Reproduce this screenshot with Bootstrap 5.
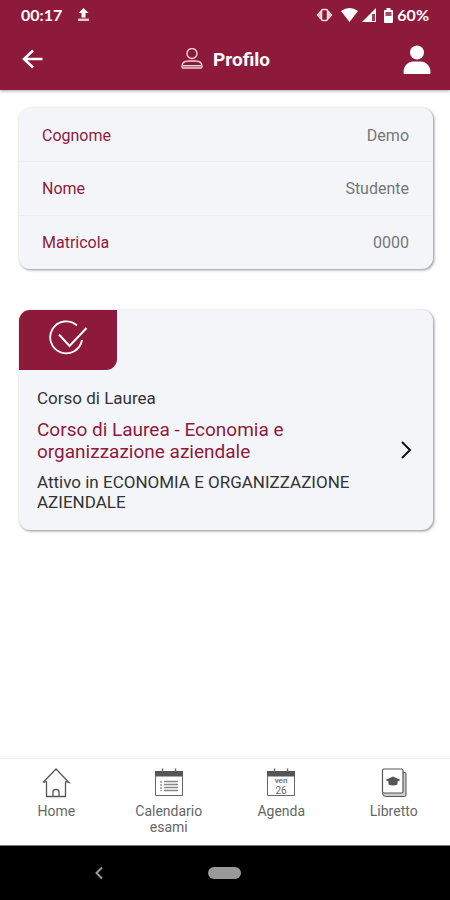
<!DOCTYPE html>
<html lang="it">
<head>
<meta charset="utf-8">
<meta name="viewport" content="width=device-width, initial-scale=1">
<title>Profilo</title>
<link href="https://cdn.jsdelivr.net/npm/bootstrap@5.3.0/dist/css/bootstrap.min.css" rel="stylesheet">
<style>
:root { --brand: #8e1a3b; --panel: #f3f5f9; }
body { font-family: Roboto, "Liberation Sans", sans-serif; background: #fff; }
svg { display: block; flex: none; }
.app-top { background: var(--brand); box-shadow: 0 1px 3px rgba(0,0,0,.35); }
.status { font: 700 16px/20px Lato, sans-serif; padding: 5px 21px 5px 21px; }
.toolbar { height: 60px; padding: 0 19px 0 20px; }
.toolbar h1 { font-size: 19px; line-height: 24px; font-weight: 700; }
.panel { background: var(--panel); border: 0; border-radius: 11px; overflow: hidden; box-shadow: 1px 1px 3px rgba(0,0,0,.45); }
.content { padding: 18px 17px 0 19px; gap: 41px; }
.data-row { font-size: 16px; line-height: 20px; padding: 18px 24px 15px 23px; }
.data-row + .data-row { border-top: 1px solid #eceef1; padding-top: 17px; padding-bottom: 16px; }
.brand-text { color: var(--brand); }
.value { color: #777; }
.flag { width: 98px; height: 60px; background: var(--brand); border-bottom-right-radius: 11px; padding-bottom: 5px; }
.course { padding: 18px 20px 18px 18px; color: #333; font-size: 17px; line-height: 20px; }
.course h2 { font-size: 19px; line-height: 22px; font-weight: 400; margin: 11px 0 9px; }
.course-text { max-width: 330px; }
.tabs { border-top: 1px solid #eee; min-height: 87px; padding-top: 8px; }
.tabs a { color: #666; font-size: 14px; line-height: 16px; gap: 5px; }
.sysbar { background: #000; height: 55px; border-top: 1px solid #777; }
.pill { width: 33px; height: 12px; background: #999; border-radius: 6px; }
</style>
</head>
<body class="d-flex flex-column min-vh-100">
<header class="app-top text-white">
  <div class="status d-flex justify-content-between align-items-center">
    <div class="d-flex align-items-center">
      <span>00:17</span>
      <svg class="ms-3" width="11" height="14" viewBox="0 0 11 14" fill="#fff"><path d="M5.500 0 10.500 5H7.500V9.500H3.500V5H.5Z"/><path d="M0 10.500h11V13H0z" opacity=".75"/></svg>
    </div>
    <div class="d-flex align-items-center">
      <svg class="me-2" width="17" height="14" viewBox="0 0 17 14" fill="none" stroke="#fff"><path d="M5 2.500 1 7l4 4.500M12 2.500 16 7l-4 4.500" fill="#fff" fill-opacity=".75" stroke-opacity=".75"/><rect x="5.500" y="1.500" width="6" height="11" rx="1.500" stroke-width="1.500" stroke-opacity=".85"/></svg>
      <svg class="me-1" width="17" height="14" viewBox="0 0 17 14" fill="#fff"><path d="M0 3Q8.500-3 17 3L8.500 14Z"/></svg>
      <svg class="me-2" width="14" height="14" viewBox="0 0 14 14"><path d="M14 0V14H0Z" fill="#fff"/><path d="M10 6h3v7h-3z" fill="#8e1a3b" opacity=".85"/></svg>
      <svg class="me-1" width="9" height="15" viewBox="0 0 9 15"><path d="M2.500 0h4v2H8a1 1 0 0 1 1 1v11a1 1 0 0 1-1 1H1a1 1 0 0 1-1-1V3a1 1 0 0 1 1-1h1.500Z" fill="#fff"/><path d="M1.500 4h6v4h-6z" fill="#8e1a3b" opacity=".8"/></svg>
      <span>60%</span>
    </div>
  </div>
  <div class="toolbar d-flex align-items-center justify-content-between">
    <button class="btn p-0 border-0" type="button" aria-label="Indietro"><svg width="25" height="22" viewBox="0 0 25 22" fill="none" stroke="#fff" stroke-width="2.500"><path d="M22.500 10H4M13 1.500 4 10l9 8.500"/></svg></button>
    <div class="d-flex align-items-center">
      <svg class="me-2" width="27" height="24" viewBox="0 0 27 24" fill="none" stroke="#fff" stroke-width="1.400" opacity=".8"><circle cx="14" cy="5.500" r="5"/><path d="M4 18.500c0-4 3-5.500 6.500-5.500h7c3.500 0 6.500 1.500 6.500 5.500 0 1.200-.5 1.500-1.200 1.500H5.200c-.8 0-1.200-.3-1.200-1.500ZM5 17.800h18"/></svg>
      <h1 class="m-0">Profilo</h1>
    </div>
    <button class="btn p-0 border-0" type="button" aria-label="Profilo utente"><svg width="28" height="30" viewBox="0 0 28 30" fill="#fff"><circle cx="14" cy="7.500" r="7"/><path d="M.5 27.500C.5 20 6 16.500 10 16.500h8c4 0 9.500 3.500 9.500 11 0 1-.5 1.500-1.500 1.500H2C1 29 .5 28.500.5 27.500Z"/></svg></button>
  </div>
</header>
<main class="content d-flex flex-column flex-grow-1">
  <section class="panel">
    <dl class="m-0">
      <div class="data-row d-flex justify-content-between"><dt class="fw-normal brand-text">Cognome</dt><dd class="m-0 value">Demo</dd></div>
      <div class="data-row d-flex justify-content-between"><dt class="fw-normal brand-text">Nome</dt><dd class="m-0 value">Studente</dd></div>
      <div class="data-row d-flex justify-content-between"><dt class="fw-normal brand-text">Matricola</dt><dd class="m-0 value">0000</dd></div>
    </dl>
  </section>
  <a href="#corso" class="panel d-block text-decoration-none">
    <div class="flag d-flex align-items-center justify-content-center">
      <svg width="40" height="36" viewBox="0 0 40 36" fill="none" stroke="#fff" stroke-width="1.800"><path d="M29 5.500A16 16 0 1 0 34 20"/><path d="M11 14.500 21.500 26 38.500 8" stroke-width="2"/></svg>
    </div>
    <div class="course d-flex align-items-center justify-content-between">
      <div class="course-text">
        <div>Corso di Laurea</div>
        <h2 class="brand-text">Corso di Laurea - Economia e organizzazione aziendale</h2>
        <div>Attivo in ECONOMIA E ORGANIZZAZIONE AZIENDALE</div>
      </div>
      <svg width="14" height="20" viewBox="0 0 14 20" fill="none" stroke="#111" stroke-width="2"><path d="m3 2 8 8-8 8"/></svg>
    </div>
  </a>
</main>
<nav class="tabs row g-0 text-center">
  <a href="#home" class="col-3 px-3 d-flex flex-column align-items-center text-decoration-none">
    <svg width="30" height="31" viewBox="0 0 30 31" fill="none" stroke="#555" stroke-width="1.300"><path d="M5.500 14.500V29.500h19V14.500M2 15.500 15 2l13 13.500-3.500-1M2 15.500l3.500-1"/><path d="M12 29.500v-5q0-2 3-2t3 2v5"/></svg>
    <span>Home</span>
  </a>
  <a href="#calendario" class="col-3 px-3 d-flex flex-column align-items-center text-decoration-none">
    <svg width="30" height="31" viewBox="0 0 30 31" fill="none" stroke="#666"><path d="M1.500 4.500h27v24h-27z"/><path d="M1 4h28v5.500H1z" fill="#555" stroke="none"/><path d="M8.500 1.500V5M21.500 1.500V5" stroke-width="1.500"/><path d="M10 14.500h14M10 17.500h14M10 20.500h14M10 23.500h14" stroke="#888" stroke-width="1.500"/><path d="M7 14v10" stroke-dasharray="2 1"/></svg>
    <span>Calendario esami</span>
  </a>
  <a href="#agenda" class="col-3 px-3 d-flex flex-column align-items-center text-decoration-none">
    <svg width="30" height="31" viewBox="0 0 30 31" fill="none" stroke="#666"><path d="M1.500 4.500h27v24h-27z"/><path d="M1 4h28v5.500H1z" fill="#555" stroke="none"/><path d="M8.500 1.500V5M21.500 1.500V5" stroke-width="1.500"/><g fill="#666" stroke="none" font-family="Roboto, sans-serif" text-anchor="middle"><text x="15" y="16" font-size="8" font-weight="500">ven</text><text x="15" y="27" font-size="10">26</text></g></svg>
    <span>Agenda</span>
  </a>
  <a href="#libretto" class="col-3 px-3 d-flex flex-column align-items-center text-decoration-none">
    <svg width="30" height="31" viewBox="0 0 30 31" fill="none" stroke="#555"><path d="M23 5.500h3a1 1 0 0 1 1 1V28a1.500 1.500 0 0 1-1.500 1.500H6.500Q3.500 29.500 3.500 26" fill="#ccc"/><rect x="3.500" y="2" width="20.500" height="24" rx="1.500" fill="#fff" stroke-width="1.200"/><path d="m6.500 13 7.500-3.500 7.500 3.500-3 1.500v3q-4.500 2-9 0v-3Z" fill="#555" stroke="none"/></svg>
    <span>Libretto</span>
  </a>
</nav>
<footer class="sysbar row g-0 align-items-center">
  <div class="col-4 d-flex justify-content-center ps-5"><button type="button" class="btn p-0 border-0" aria-label="Indietro di sistema"><svg width="10" height="14" viewBox="0 0 10 14" fill="none" stroke="#999" stroke-width="2"><path d="M8 1.500 2.500 7 8 12.500"/></svg></button></div>
  <div class="col-4 d-flex justify-content-center"><button type="button" class="btn p-0 border-0 pill" aria-label="Schermata iniziale"></button></div>
</footer>
<script src="https://cdn.jsdelivr.net/npm/bootstrap@5.3.0/dist/js/bootstrap.bundle.min.js"></script>
</body>
</html>
